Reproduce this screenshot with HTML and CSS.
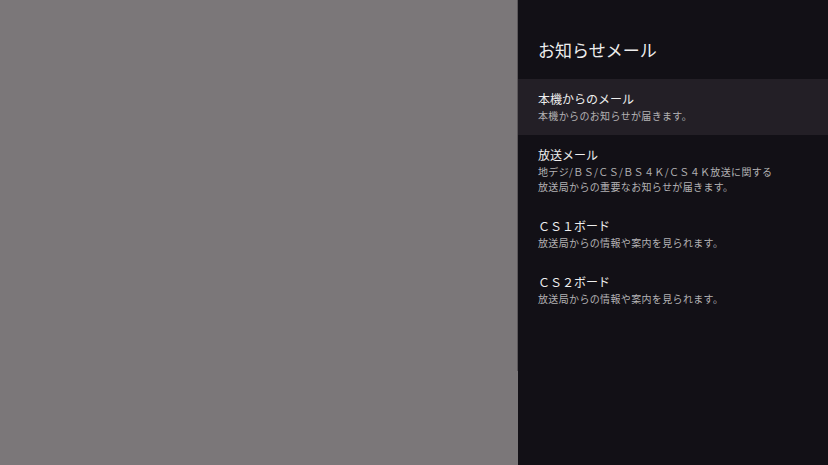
FILE: index.html
```html
<!DOCTYPE html>
<html lang="ja">
<head>
<meta charset="utf-8">
<title>お知らせメール</title>
<link rel="stylesheet" href="styles.css">
</head>
<body>
<div class="screen">
  <div class="backdrop"></div>
  <aside class="panel">
    <h1 class="panel-title">お知らせメール</h1>
    <ul class="menu">
      <li class="item selected">
        <div class="item-title">本機からのメール</div>
        <div class="item-desc">本機からのお知らせが届きます。</div>
      </li>
      <li class="item">
        <div class="item-title">放送メール</div>
        <div class="item-desc">地デジ/ＢＳ/ＣＳ/ＢＳ４Ｋ/ＣＳ４Ｋ放送に関する<br>放送局からの重要なお知らせが届きます。</div>
      </li>
      <li class="item">
        <div class="item-title">ＣＳ１ボード</div>
        <div class="item-desc">放送局からの情報や案内を見られます。</div>
      </li>
      <li class="item">
        <div class="item-title">ＣＳ２ボード</div>
        <div class="item-desc">放送局からの情報や案内を見られます。</div>
      </li>
    </ul>
  </aside>
</div>
</body>
</html>
```

FILE: styles.css
```css
* { box-sizing: border-box; }
html, body {
  margin: 0;
  padding: 0;
  width: 828px;
  height: 465px;
  overflow: hidden;
  background: #7b7779;
  font-family: "Noto Sans CJK JP", "Noto Sans", sans-serif;
}
.screen {
  display: flex;
  width: 828px;
  height: 465px;
}
.backdrop {
  flex: 1;
  background: #7b7779;
}
.panel {
  width: 311px;
  height: 465px;
  background: #121016;
  border-left: 1px solid #5c585b;
  border-image: linear-gradient(to bottom, #5c585b 0, #5c585b 370px, #7b7779 370px) 1;
  display: flex;
  flex-direction: column;
}
.panel-title {
  margin: 0;
  height: 79px;
  padding: 38px 0 0 20px;
  font-size: 17px;
  font-weight: normal;
  line-height: 24px;
  color: #ededed;
}
.menu {
  list-style: none;
  margin: 0;
  padding: 0;
}
.item {
  padding: 11px 20px 12px 20px;
}
.item.selected {
  background: #231f26;
}
.item-title {
  font-size: 12px;
  line-height: 18px;
  color: #eeeeee;
}
.item-desc {
  font-size: 10px;
  line-height: 15px;
  letter-spacing: 0.35px;
  color: #b3b2b4;
}
```
